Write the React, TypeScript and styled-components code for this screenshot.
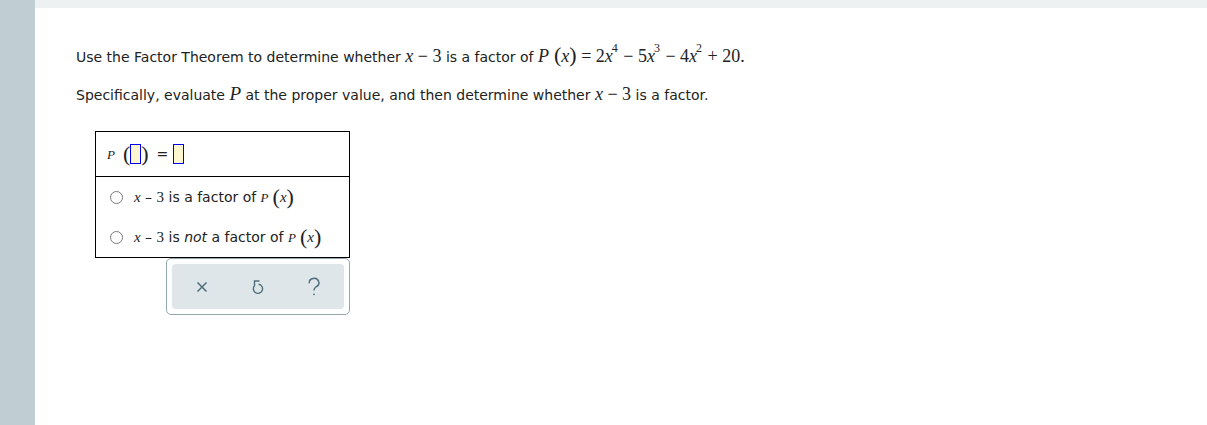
import React from "react";
import styled, { createGlobalStyle } from "styled-components";

const GlobalStyle = createGlobalStyle`
  html, body { margin: 0; padding: 0; background: #fff; }
  body { font-family: "DejaVu Sans", Verdana, sans-serif; color: #222; }
`;

const Page = styled.div`
  display: flex;
  width: 1207px;
  height: 425px;
  overflow: hidden;
`;

const Sidebar = styled.div`
  width: 35px;
  flex: none;
  background: #c0ced4;
`;

const Main = styled.div`
  flex: 1;
  display: flex;
  flex-direction: column;
`;

const TopBar = styled.div`
  height: 8px;
  background: #edf1f1;
`;

const Content = styled.div`
  padding: 36px 0 0 41px;
  font-size: 14px;
`;

const Line = styled.div<{ $mb?: number }>`
  height: 24px;
  line-height: 24px;
  white-space: nowrap;
  margin-bottom: ${(p) => p.$mb ?? 0}px;
`;

const M = styled.span<{ $size?: number }>`
  font-family: "Liberation Serif", "Times New Roman", serif;
  font-size: ${(p) => p.$size ?? 18}px;
  line-height: 1;
`;

const I = styled.i`
  font-style: italic;
`;

const Op = styled.span`
  margin: 0 4.5px;
`;

const Sup = styled.span`
  font-size: 12px;
  position: relative;
  top: -10px;
  margin-left: -1px;
  margin-right: 1px;
`;

const Paren = styled.span<{ $size?: number; $ml?: number }>`
  font-family: "Liberation Serif", "Times New Roman", serif;
  font-size: ${(p) => p.$size ?? 22}px;
  line-height: 1;
  margin-left: ${(p) => p.$ml ?? 0}px;
`;

const Box = styled.div`
  margin: 0 0 0 19px;
  width: 253px;
  border: 1px solid #000;
`;

const FormulaRow = styled.div`
  height: 44px;
  border-bottom: 1px solid #000;
  display: flex;
  align-items: center;
  padding-left: 11px;
`;

const Blank = styled.span`
  display: inline-block;
  width: 9px;
  height: 18px;
  border: 1px solid #0000ee;
  background: #fdf6cf;
`;

const Eq = styled.span`
  font-size: 14px;
  margin: 0 5px 0 8px;
`;

const Options = styled.div`
  padding: 0 0 0 14px;
  display: flex;
  flex-direction: column;
`;

const Option = styled.label`
  height: 40px;
  display: flex;
  align-items: center;
  font-size: 14px;
  white-space: pre;
`;

const Radio = styled.span`
  width: 11px;
  height: 11px;
  border: 1px solid #7a7a7a;
  border-radius: 50%;
  margin-right: 11px;
  flex: none;
`;

const Tools = styled.div`
  margin: 0 0 0 90px;
  width: 184px;
  height: 57px;
  border: 1px solid #93a7ae;
  border-radius: 5px;
  padding: 5px;
  box-sizing: border-box;
`;

const ToolInner = styled.div`
  height: 100%;
  background: #dfe6e9;
  border-radius: 4px;
  display: flex;
  align-items: center;
  justify-content: space-around;
  padding: 0 2px;
`;

const ToolBtn = styled.span`
  width: 30px;
  height: 30px;
  display: flex;
  align-items: center;
  justify-content: center;
  color: #4f6d7a;
`;

const Choice = ({ not }: { not?: boolean }) => (
  <Option>
    <Radio />
    <M $size={15}>
      <I>x</I>
    </M>
    {" \u2013 "}
    <M $size={15}>3</M>
    {not ? (
      <span>
        {" is "}
        <I>not</I>
        {" a factor of "}
      </span>
    ) : (
      <span>{" is a factor of "}</span>
    )}
    <M $size={13}>
      <I>P</I>
    </M>
    <Paren $ml={4}>(</Paren>
    <M $size={15}>
      <I>x</I>
    </M>
    <Paren>)</Paren>
  </Option>
);

export default function App() {
  return (
    <>
      <GlobalStyle />
      <Page>
        <Sidebar />
        <Main>
          <TopBar />
          <Content>
            <Line $mb={15}>
              {"Use the Factor Theorem to determine whether "}
              <M>
                <I>x</I>
                <Op>{"\u2212"}</Op>3
              </M>
              {" is a factor of "}
              <M>
                <I>P</I>
              </M>
              <Paren $ml={5}>(</Paren>
              <M>
                <I>x</I>
              </M>
              <Paren>)</Paren>
              <M>
                <Op>=</Op>2<I>x</I>
                <Sup>4</Sup>
                <Op>{"\u2212"}</Op>5<I>x</I>
                <Sup>3</Sup>
                <Op>{"\u2212"}</Op>4<I>x</I>
                <Sup>2</Sup>
                <Op>+</Op>20.
              </M>
            </Line>
            <Line $mb={24}>
              {"Specifically, evaluate "}
              <M $size={19}>
                <I>P</I>
              </M>
              {" at the proper value, and then determine whether "}
              <M>
                <I>x</I>
                <Op>{"\u2212"}</Op>3
              </M>
              {" is a factor."}
            </Line>
            <Box>
              <FormulaRow>
                <M $size={13}>
                  <I>P</I>
                </M>
                <Paren $ml={8}>(</Paren>
                <Blank />
                <Paren>)</Paren>
                <Eq>=</Eq>
                <Blank />
              </FormulaRow>
              <Options>
                <Choice />
                <Choice not />
              </Options>
            </Box>
            <Tools>
              <ToolInner>
                <ToolBtn>
                  <svg width="14" height="14" viewBox="0 0 14 14" fill="none" stroke="currentColor" strokeWidth="1.5">
                    <path d="M2.5 2.5 L11.5 11.5 M11.5 2.5 L2.5 11.5" />
                  </svg>
                </ToolBtn>
                <ToolBtn>
                  <svg width="14" height="16" viewBox="0 0 14 16" fill="none" stroke="currentColor" strokeWidth="1.4">
                    <path d="M8.5 2 H3.5 V6.5" />
                    <path d="M4 6.2 A4.6 4.6 0 1 0 7.6 5.2" />
                  </svg>
                </ToolBtn>
                <ToolBtn>
                  <svg width="14" height="20" viewBox="0 0 14 20" fill="none" stroke="currentColor" strokeWidth="1.4">
                    <path d="M2.3 6.2 A4.8 4.4 0 1 1 9 9.8 C7.6 10.8 7 11.6 7 13.6" />
                    <circle cx="7" cy="17.3" r="0.9" fill="currentColor" stroke="none" />
                  </svg>
                </ToolBtn>
              </ToolInner>
            </Tools>
          </Content>
        </Main>
      </Page>
    </>
  );
}
